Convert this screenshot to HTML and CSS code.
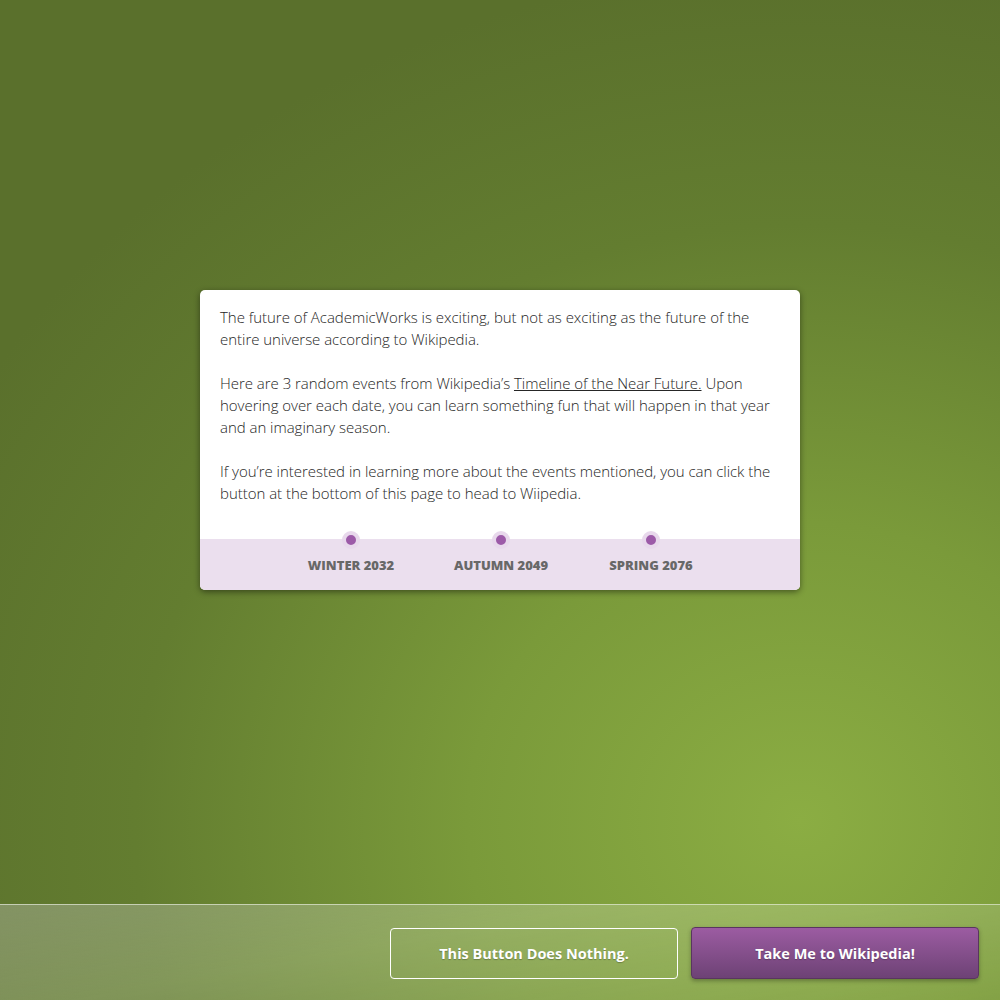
FILE: index.html
```html
<!DOCTYPE html>
<html>
<head>
<meta charset="utf-8">
<link rel="stylesheet" href="styles.css">
</head>
<body>
<main class="stage">
  <section class="card">
    <div class="card-body">
      <p>The future of AcademicWorks is exciting, but not as exciting as the future of the entire universe according to Wikipedia.</p>
      <p>Here are 3 random events from Wikipedia’s <a href="#" class="link">Timeline of the Near Future.</a> Upon hovering over each date, you can learn something fun that will happen in that year and an imaginary season.</p>
      <p>If you’re interested in learning more about the events mentioned, you can click the button at the bottom of this page to head to Wiipedia.</p>
    </div>
    <div class="timeline">
      <div class="event"><span class="dot"></span><span class="label">WINTER 2032</span></div>
      <div class="event"><span class="dot"></span><span class="label">AUTUMN 2049</span></div>
      <div class="event"><span class="dot"></span><span class="label">SPRING 2076</span></div>
    </div>
  </section>
</main>
<footer class="footer">
  <button class="btn btn-ghost">This Button Does Nothing.</button>
  <button class="btn btn-primary">Take Me to Wikipedia!</button>
</footer>
</body>
</html>
```
FILE: styles.css
```css
html, body {
  margin: 0;
  padding: 0;
  height: 100%;
}
body {
  font-family: "Open Sans", "Liberation Sans", sans-serif;
  background: radial-gradient(ellipse 95% 85% at 80% 82%, #8bad43 0%, #7a9a3a 35%, #637d30 70%, #5a702c 100%);
  display: flex;
  flex-direction: column;
  min-height: 1000px;
  overflow: hidden;
}
.stage {
  flex: 1;
  display: flex;
  justify-content: center;
  padding-top: 290px;
}
.card {
  width: 600px;
  height: 300px;
  background: #fff;
  border-radius: 5px;
  box-shadow: 0 2px 6px rgba(0, 0, 0, 0.45);
  display: flex;
  flex-direction: column;
  overflow: hidden;
}
.card-body {
  padding: 16px 20px 0 20px;
  flex: 1;
}
.card-body p {
  margin: 0 0 22px 0;
  font-size: 15px;
  font-weight: 300;
  line-height: 22px;
  color: #262626;
  letter-spacing: -0.03px;
}
.card-body p:last-child {
  margin-bottom: 0;
}
.link {
  color: #262626;
  text-decoration: underline;
}
.timeline {
  height: 51px;
  background: #ebdfee;
  display: flex;
  justify-content: center;
  padding-left: 2px;
}
.event {
  width: 150px;
  display: flex;
  flex-direction: column;
  align-items: center;
  position: relative;
}
.dot {
  position: absolute;
  top: -8px;
  left: 66px;
  width: 10px;
  height: 10px;
  border-radius: 50%;
  background: #9c5aa8;
  border: 4px solid #e8d8ec;
}
.label {
  margin-top: 17px;
  font-size: 13px;
  font-weight: 800;
  color: #686868;
}
.footer {
  height: 73px;
  border-top: 1px solid rgba(255, 255, 255, 0.55);
  background: linear-gradient(170deg, rgba(200, 200, 200, 0.35) 0%, rgba(255, 255, 255, 0.2) 40%, rgba(255, 255, 255, 0.05) 100%);
  display: flex;
  justify-content: flex-end;
  align-items: flex-start;
  gap: 13px;
  padding: 22px 21px 0 0;
}
.btn {
  width: 288px;
  height: 52px;
  border-radius: 4px;
  font-family: "Open Sans", "Liberation Sans", sans-serif;
  font-size: 14.5px;
  font-weight: 700;
  color: #fff;
  text-shadow: 0 1px 1px rgba(0, 0, 0, 0.25);
  cursor: pointer;
}
.btn-ghost {
  background: transparent;
  border: 1px solid #fff;
  margin-top: 1px;
  height: 51px;
}
.btn-primary {
  background: linear-gradient(#9c5ca2, #6d4275);
  border: 1px solid #5a3560;
  box-shadow: 0 2px 4px rgba(0, 0, 0, 0.3);
}
```
